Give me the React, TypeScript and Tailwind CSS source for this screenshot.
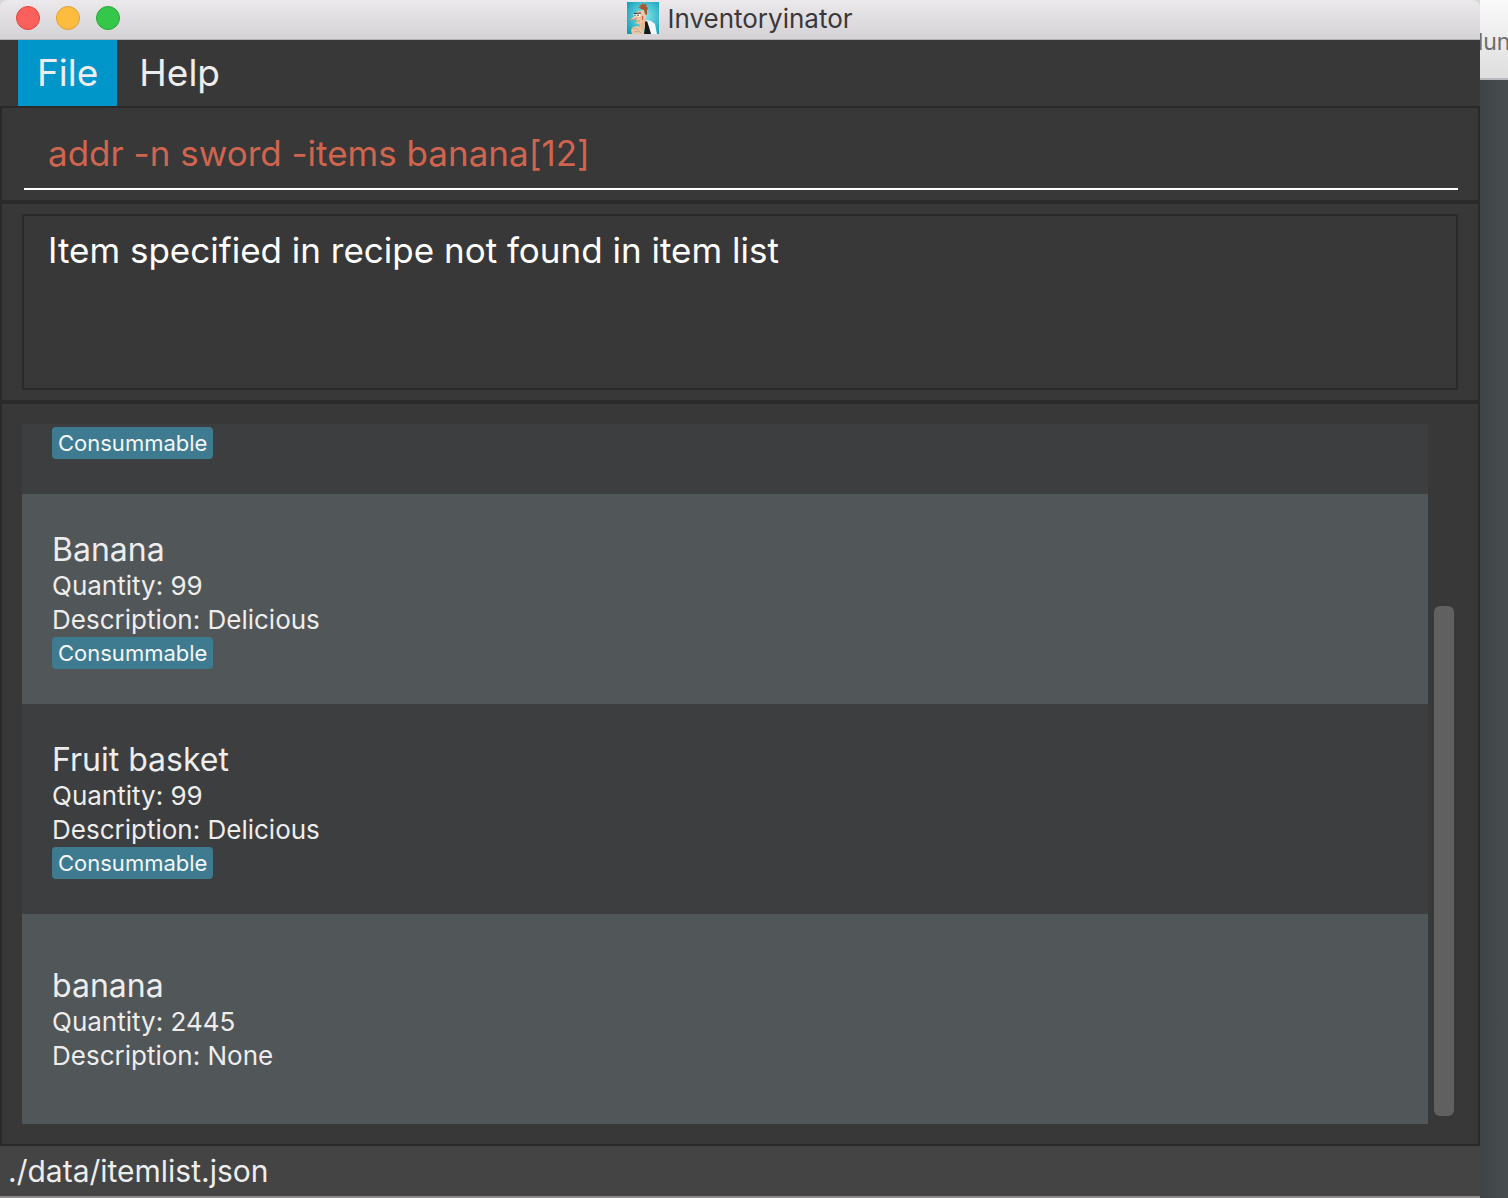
import React from "react";

type Item = { name: string; quantity: number; description: string; tags: string[] };

const items: Item[] = [
  { name: "Banana", quantity: 99, description: "Delicious", tags: ["Consummable"] },
  { name: "Fruit basket", quantity: 99, description: "Delicious", tags: ["Consummable"] },
  { name: "banana", quantity: 2445, description: "None", tags: [] },
];

function AppIcon() {
  return (
    <svg width="32" height="32" viewBox="0 0 32 32" aria-hidden="true" className="shrink-0">
      <defs>
        <radialGradient id="sky" cx="0.55" cy="0.45" r="0.7">
          <stop offset="0" stopColor="#8fe3e8" />
          <stop offset="0.5" stopColor="#4cc4d3" />
          <stop offset="1" stopColor="#129db8" />
        </radialGradient>
      </defs>
      <rect width="32" height="32" fill="url(#sky)" />
      {/* body */}
      <path d="M5 32 L4 28 L6 25 L10 24 L14 25 L17 22 L17 32 Z" fill="#e6c8a4" />
      {/* neck */}
      <path d="M12 20 L18 16 L19 20 L17 29 L13 26 Z" fill="#e9b992" />
      {/* coat */}
      <path d="M19 18 L24 19 L28 22 L30 32 L24 32 L20 24 Z" fill="#f4f8f8" />
      <path d="M18 20 L20 19 L22 25 L24 32 L17 32 L18 26 Z" fill="#17181c" />
      {/* head, nose and jaw */}
      <path d="M9 10 L12 9 L17 8 L18 12 L19 15 L18 18 L15 21 L12 22 L8 21 L10 19 L9 17 L6 18 L3 18 L5 16 L8 14 Z" fill="#f0c6a2" />
      <path d="M3 18 L8 17 L10 16 M8 19 L13 19" stroke="#bd8160" strokeWidth="0.7" fill="none" />
      <path d="M6 27 L9 26 L12 28 M7 30 L12 29 L14 31" stroke="#c49673" strokeWidth="0.7" fill="none" />
      {/* eyes and brow */}
      <ellipse cx="8" cy="13" rx="1.500" ry="1.600" fill="#fff" />
      <ellipse cx="11.500" cy="13" rx="2" ry="1.800" fill="#fff" />
      <circle cx="8" cy="13.200" r="0.7" fill="#29304d" />
      <circle cx="11" cy="13.200" r="0.8" fill="#29304d" />
      <path d="M7 11.500 L14 11" stroke="#343048" strokeWidth="1.100" />
      <path d="M15.500 14 V18" stroke="#ce5944" strokeWidth="1.200" />
      {/* hair */}
      <path d="M11 5 L14 5 L12 3 L15 3 L15 1 L17 2.500 L20 2 L19 4 L21 6 L20 8 L20 13 L18 12 L17 8 L14 7 Z" fill="#a8582c" />
    </svg>
  );
}

function Tag({ label }: { label: string }) {
  return (
    <span className="flex h-8 items-center self-start rounded-[4px] bg-[#3e7b91] px-1.5 text-[22px] text-[#f3f6f6]">
      {label}
    </span>
  );
}

function ItemRow({ item }: { item: Item }) {
  return (
    <li className="flex h-[210px] shrink-0 flex-col justify-center px-[30px] odd:bg-[#3c3e3f] even:bg-[#515658]">
      <h2 className="pt-0.5 text-[32px] leading-[38px]">{item.name}</h2>
      <p className="text-[26px] leading-[34px]">Quantity: {item.quantity}</p>
      <p className="text-[26px] leading-[34px]">Description: {item.description}</p>
      {item.tags.map((tag) => (
        <Tag key={tag} label={tag} />
      ))}
    </li>
  );
}

export default function App() {
  return (
    <div className="flex min-h-screen overflow-hidden bg-[#383838] font-[Inter,sans-serif] text-[#ededed]">
      <div className="flex min-w-0 flex-1 flex-col">
        <div className="bg-[#d8d8d8]">
          <header className="flex h-10 items-center rounded-t-lg border-b border-[#b4b2b4] bg-linear-to-b from-[#ebe9ec] to-[#d4d2d5] px-4 pb-1">
            <div className="flex flex-1 gap-4">
              <button aria-label="Close" className="size-6 rounded-full border border-[#e2443f] bg-[#fc605c]" />
              <button aria-label="Minimize" className="size-6 rounded-full border border-[#dfa033] bg-[#fdbc40]" />
              <button aria-label="Zoom" className="size-6 rounded-full border border-[#27a833] bg-[#34c749]" />
            </div>
            <div className="flex items-center gap-2">
              <AppIcon />
              <h1 className="pt-0.5 text-[26px] leading-8 text-[#3a383a]">Inventoryinator</h1>
            </div>
            <div className="flex-1" />
          </header>
        </div>

        <nav className="flex h-[66px] pl-[18px] text-[37px]">
          <button className="bg-[#0096c9] px-[19px]">File</button>
          <button className="px-[22px]">Help</button>
        </nav>

        <section className="h-24 border-2 border-[#2a2a2a] pt-2 pr-5 pl-[22px]">
          <input
            aria-label="Command"
            defaultValue="addr -n sword -items banana[12]"
            className="block h-[74px] w-full border-b-2 border-white bg-transparent px-6 pt-0.5 text-[35px] text-[#d0654f] outline-none"
          />
        </section>

        <section className="h-[200px] border-2 border-[#2a2a2a] px-5 py-2.5">
          <div role="status" className="h-full border-2 border-[#2a2a2a] px-6 py-3 text-[35px] leading-[44px] text-white">
            Item specified in recipe not found in item list
          </div>
        </section>

        <main className="flex flex-1 gap-1.5 border-2 border-[#2a2a2a] py-5 pr-6 pl-5">
          <ul className="flex min-w-0 flex-1 flex-col">
            <li className="flex h-[70px] shrink-0 flex-col bg-[#3c3e3f] px-[30px] pt-[3px]">
              <Tag label="Consummable" />
            </li>
            {items.map((item) => (
              <ItemRow key={item.name} item={item} />
            ))}
          </ul>
          <div className="flex w-5 flex-col justify-end pb-2">
            <div className="h-[510px] rounded-md bg-[#606060]" />
          </div>
        </main>

        <footer className="flex h-[50px] items-center bg-[#444444] px-2 text-[30px]">./data/itemlist.json</footer>
        <div className="h-0.5 bg-[#8c8a8b]" />
      </div>

      <aside className="flex w-7 shrink-0 flex-col overflow-hidden bg-linear-to-r from-[#3d4245] to-[#484d50]">
        <div className="flex h-20 justify-center border-b-2 border-[#b9b9bd] bg-linear-to-b from-[#fafafa] to-[#dedede] pt-[26px] text-[23px] leading-8 text-[#6d6d70]">
          lun
        </div>
      </aside>
    </div>
  );
}
